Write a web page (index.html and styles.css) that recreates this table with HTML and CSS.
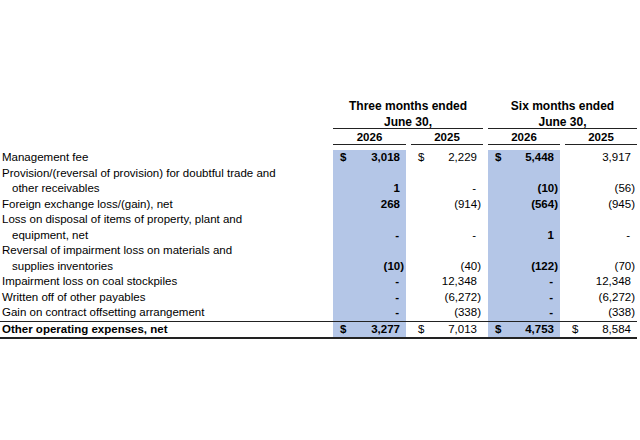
FILE: index.html
```html
<!DOCTYPE html>
<html>
<head>
<meta charset="utf-8">
<link rel="stylesheet" href="styles.css">
</head>
<body>
<div class="sheet">
  <div class="row head-group">
    <div></div>
    <div class="group">Three months ended<br>June 30,</div>
    <div class="group">Six months ended<br>June 30,</div>
  </div>
  <div class="row head-years">
    <div></div>
    <div class="year">2026</div>
    <div class="year">2025</div>
    <div class="year">2026</div>
    <div class="year">2025</div>
  </div>
  <div class="body">
    <div class="row">
      <div class="lbl">Management fee</div>
      <div class="num hl"><span>$</span><span class="p">3,018</span></div>
      <div class="num"><span>$</span><span class="p">2,229</span></div>
      <div class="num hl"><span>$</span><span class="p">5,448</span></div>
      <div class="num"><span></span><span class="p">3,917</span></div>
    </div>
    <div class="row">
      <div class="lbl">Provision/(reversal of provision) for doubtful trade and<span class="cont">other receivables</span></div>
      <div class="num hl"><span></span><span class="p">1</span></div>
      <div class="num"><span></span><span class="d">-</span></div>
      <div class="num hl"><span></span><span>(10)</span></div>
      <div class="num"><span></span><span>(56)</span></div>
    </div>
    <div class="row">
      <div class="lbl">Foreign exchange loss/(gain), net</div>
      <div class="num hl"><span></span><span class="p">268</span></div>
      <div class="num"><span></span><span>(914)</span></div>
      <div class="num hl"><span></span><span>(564)</span></div>
      <div class="num"><span></span><span>(945)</span></div>
    </div>
    <div class="row">
      <div class="lbl">Loss on disposal of items of property, plant and<span class="cont">equipment, net</span></div>
      <div class="num hl"><span></span><span class="d">-</span></div>
      <div class="num"><span></span><span class="d">-</span></div>
      <div class="num hl"><span></span><span class="p">1</span></div>
      <div class="num"><span></span><span class="d">-</span></div>
    </div>
    <div class="row">
      <div class="lbl">Reversal of impairment loss on materials and<span class="cont">supplies inventories</span></div>
      <div class="num hl"><span></span><span>(10)</span></div>
      <div class="num"><span></span><span>(40)</span></div>
      <div class="num hl"><span></span><span>(122)</span></div>
      <div class="num"><span></span><span>(70)</span></div>
    </div>
    <div class="row">
      <div class="lbl">Impairment loss on coal stockpiles</div>
      <div class="num hl"><span></span><span class="d">-</span></div>
      <div class="num"><span></span><span class="p">12,348</span></div>
      <div class="num hl"><span></span><span class="d">-</span></div>
      <div class="num"><span></span><span class="p">12,348</span></div>
    </div>
    <div class="row">
      <div class="lbl">Written off of other payables</div>
      <div class="num hl"><span></span><span class="d">-</span></div>
      <div class="num"><span></span><span>(6,272)</span></div>
      <div class="num hl"><span></span><span class="d">-</span></div>
      <div class="num"><span></span><span>(6,272)</span></div>
    </div>
    <div class="row">
      <div class="lbl">Gain on contract offsetting arrangement</div>
      <div class="num hl"><span></span><span class="d">-</span></div>
      <div class="num"><span></span><span>(338)</span></div>
      <div class="num hl"><span></span><span class="d">-</span></div>
      <div class="num"><span></span><span>(338)</span></div>
    </div>
    <div class="row total">
      <div class="lbl">Other operating expenses, net</div>
      <div class="num hl"><span>$</span><span class="p">3,277</span></div>
      <div class="num"><span>$</span><span class="p">7,013</span></div>
      <div class="num hl"><span>$</span><span class="p">4,753</span></div>
      <div class="num"><span>$</span><span class="p">8,584</span></div>
    </div>
  </div>
</div>
</body>
</html>
```
FILE: styles.css
```css
html, body {
  margin: 0;
  padding: 0;
  background: #ffffff;
}
body {
  font-family: "Liberation Sans", Arial, sans-serif;
  font-size: 11.5px;
  color: #000000;
}
.sheet {
  width: 637px;
  padding-top: 98px;
}
.row {
  display: grid;
  grid-template-columns: 328px 73px 72px 72px 72px;
  column-gap: 5px;
  line-height: 15.5px;
}
.head-group .group {
  grid-column: span 2;
  font-weight: bold;
  text-align: center;
  line-height: 16px;
  height: 30px;
  border-bottom: 1px solid #222;
  font-size: 12px;
}
.head-years .year {
  font-weight: bold;
  text-align: center;
  line-height: 13px;
  padding-top: 2px;
  border-bottom: 1px solid #222;
}
.body {
  margin-top: 5px;
}
.lbl {
  padding-left: 2px;
  white-space: nowrap;
}
.cont {
  display: block;
  padding-left: 10px;
}
.num {
  display: flex;
  justify-content: space-between;
  align-items: flex-end;
  padding-left: 7px;
  padding-right: 2px;
}
.hl {
  background: #b4c6e7;
  font-weight: bold;
}
.p {
  padding-right: 4px;
}
.d {
  padding-right: 5px;
}
.total {
  border-top: 1px solid #222;
  border-bottom: 2px solid #222;
}
.total .lbl {
  font-weight: bold;
}
```
